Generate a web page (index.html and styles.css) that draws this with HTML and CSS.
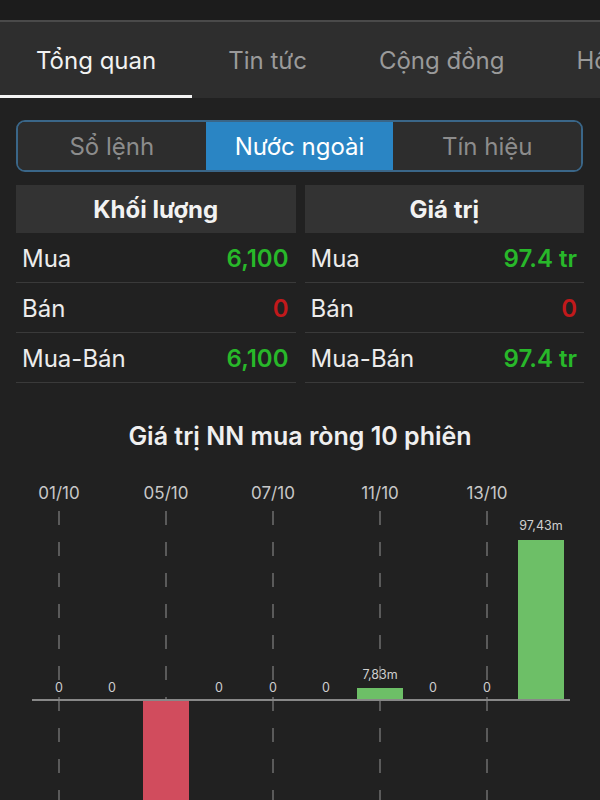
FILE: index.html
```html
<!DOCTYPE html>
<html lang="vi">
<head>
<meta charset="utf-8">
<title>Nước ngoài</title>
<link rel="stylesheet" href="styles.css">
</head>
<body>
<div class="topbar"></div>
<nav class="tabs">
  <div class="tab active">Tổng quan</div>
  <div class="tab">Tin tức</div>
  <div class="tab">Cộng đồng</div>
  <div class="tab">Hồ sơ</div>
</nav>

<div class="segment">
  <div class="seg">Sổ lệnh</div>
  <div class="seg on">Nước ngoài</div>
  <div class="seg">Tín hiệu</div>
</div>

<div class="tables">
  <div class="table">
    <div class="thead">Khối lượng</div>
    <div class="row"><span>Mua</span><span class="up">6,100</span></div>
    <div class="row"><span>Bán</span><span class="down">0</span></div>
    <div class="row"><span>Mua-Bán</span><span class="up">6,100</span></div>
  </div>
  <div class="table">
    <div class="thead">Giá trị</div>
    <div class="row"><span>Mua</span><span class="up">97.4 tr</span></div>
    <div class="row"><span>Bán</span><span class="down">0</span></div>
    <div class="row"><span>Mua-Bán</span><span class="up">97.4 tr</span></div>
  </div>
</div>

<h2 class="chart-title">Giá trị NN mua ròng 10 phiên</h2>

<svg class="chart" width="600" height="340" viewBox="0 0 600 340">
  <g class="dates">
    <text x="59" y="39">01/10</text>
    <text x="166" y="39">05/10</text>
    <text x="273" y="39">07/10</text>
    <text x="380" y="39">11/10</text>
    <text x="487" y="39">13/10</text>
  </g>
  <g class="grid">
    <line x1="59" y1="51" x2="59" y2="340"/>
    <line x1="166" y1="51" x2="166" y2="340"/>
    <line x1="273" y1="51" x2="273" y2="340"/>
    <line x1="380" y1="51" x2="380" y2="340"/>
    <line x1="487" y1="51" x2="487" y2="340"/>
  </g>
  <rect class="neg" x="143" y="240" width="46" height="110"/>
  <rect class="pos" x="357" y="228" width="46" height="12"/>
  <rect class="pos" x="518" y="80" width="46" height="160"/>
  <line class="axis" x1="32" y1="240" x2="570" y2="240"/>
  <g class="vals">
    <text x="59" y="232">0</text>
    <text x="112" y="232">0</text>
    <text x="219" y="232">0</text>
    <text x="273" y="232">0</text>
    <text x="326" y="232">0</text>
    <text x="433" y="232">0</text>
    <text x="487" y="232">0</text>
    <text x="380" y="219">7,83m</text>
    <text x="541" y="70">97,43m</text>
  </g>
</svg>
</body>
</html>
```
FILE: styles.css
```css
html, body {
  margin: 0;
  padding: 0;
  background: #212121;
  font-family: "Inter", "Noto Sans", "Liberation Sans", sans-serif;
  color: #ececec;
  overflow: hidden;
}

.topbar {
  height: 20px;
  background: #1c1c1c;
  border-bottom: 2px solid #4a4a4a;
}

.tabs {
  display: flex;
  height: 76px;
  background: #2e2e2e;
  overflow: hidden;
  white-space: nowrap;
}

.tab {
  flex-shrink: 0;
  display: flex;
  align-items: center;
  padding: 0 36px;
  font-size: 24px;
  color: #9a9a9a;
  border-bottom: 3px solid transparent;
  border-top: 3px solid transparent;
  box-sizing: border-box;
}

.tab.active {
  color: #f2f2f2;
  border-bottom-color: #f4f4f4;
}

.segment {
  display: flex;
  margin: 22px 17px 0 16px;
  height: 52px;
  box-sizing: border-box;
  border: 2px solid #3a6688;
  border-radius: 9px;
  overflow: hidden;
}

.seg {
  flex: 1;
  display: flex;
  align-items: center;
  justify-content: center;
  background: #2d2d2d;
  color: #8c8c8c;
  font-size: 24px;
}

.seg.on {
  background: #2a85c4;
  color: #ffffff;
}

.tables {
  display: grid;
  grid-template-columns: 1fr 1fr;
  column-gap: 9px;
  padding: 0 16px;
  margin-top: 13px;
}

.thead {
  height: 48px;
  display: flex;
  align-items: center;
  justify-content: center;
  background: #333333;
  font-size: 24px;
  font-weight: 700;
  color: #f2f2f2;
}

.row {
  display: flex;
  align-items: center;
  justify-content: space-between;
  height: 50px;
  box-sizing: border-box;
  padding: 2px 7px 0 6px;
  border-bottom: 1px solid #3a3a3a;
  font-size: 24px;
  color: #ececec;
}

.up {
  color: #28b82a;
  font-weight: 600;
}

.down {
  color: #c2191b;
  font-weight: 600;
}

.chart-title {
  margin: 38px 0 0;
  height: 30px;
  line-height: 30px;
  text-align: center;
  font-size: 25px;
  font-weight: 600;
  color: #efefef;
}

.chart {
  display: block;
  margin-top: 9px;
}

.dates text {
  font-family: "Inter", "Liberation Sans", sans-serif;
  font-size: 17px;
  fill: #c8c8c8;
  text-anchor: middle;
}

.grid line {
  stroke: #6e6e6e;
  stroke-width: 1.5;
  stroke-dasharray: 14 17;
}

.axis {
  stroke: #888888;
  stroke-width: 2;
}

.pos {
  fill: #6dbf67;
}

.neg {
  fill: #d14c5d;
}

.vals text {
  font-family: "Inter", "Liberation Sans", sans-serif;
  font-size: 12.5px;
  fill: #cfcfcf;
  text-anchor: middle;
}
```
